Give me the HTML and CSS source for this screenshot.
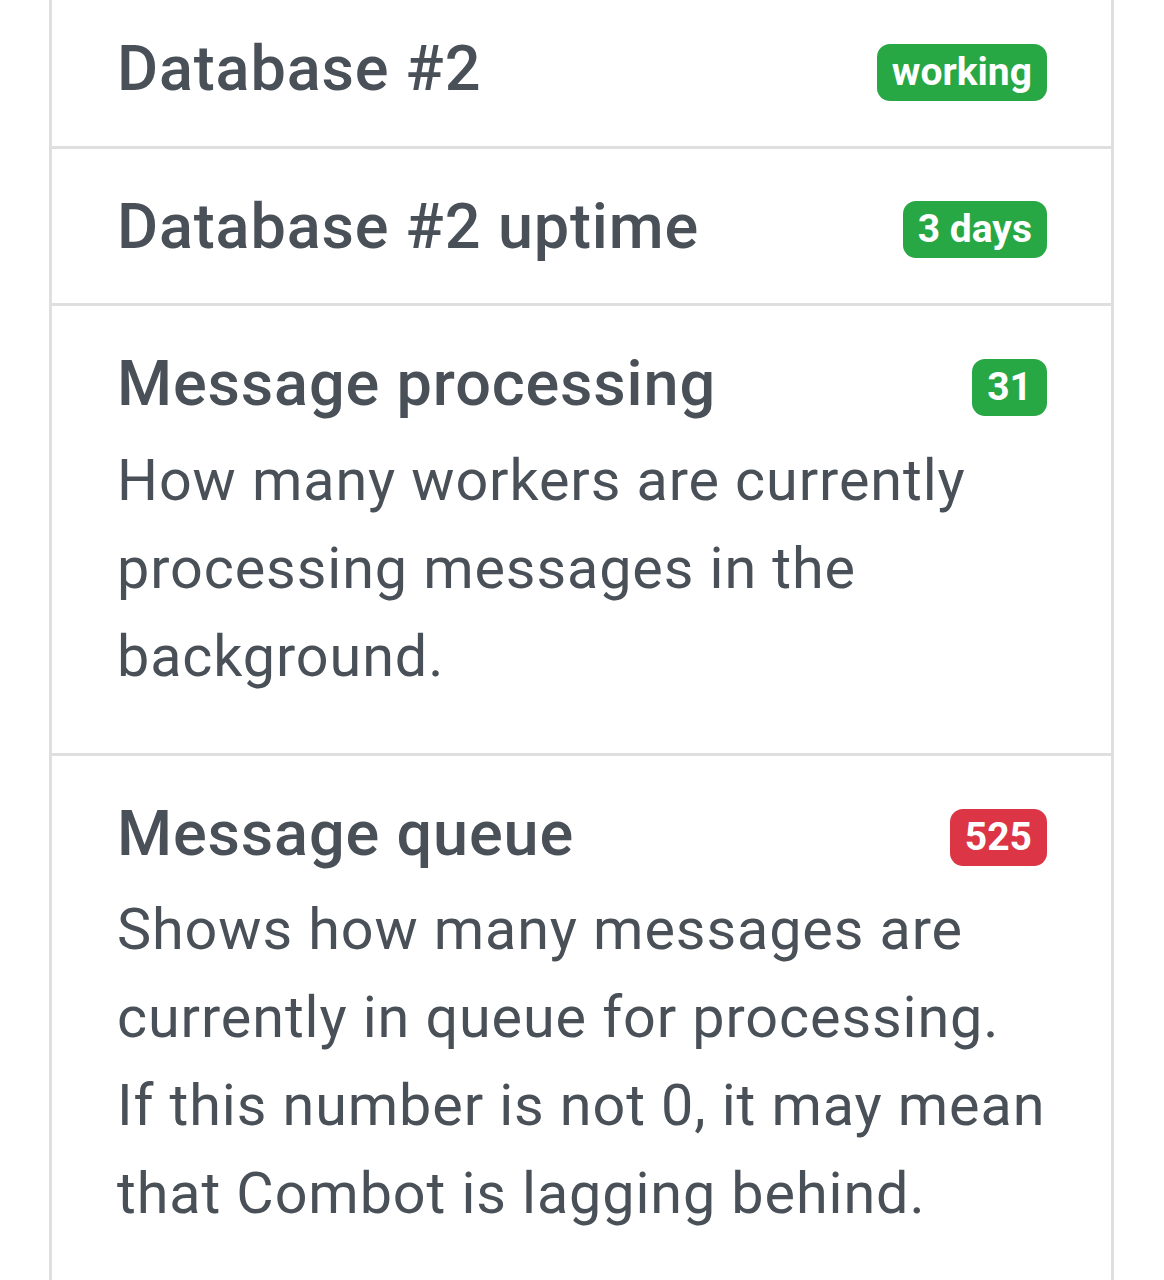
FILE: index.html
```html
<!DOCTYPE html>
<html lang="en">
<head>
<meta charset="utf-8">
<title>Status</title>
<link rel="stylesheet" href="styles.css">
</head>
<body>
<div class="page">
  <ul class="list">
    <li class="item">
      <div class="item-head">
        <h5 class="title">Database #2</h5>
        <span class="badge badge-success">working</span>
      </div>
    </li>
    <li class="item">
      <div class="item-head">
        <h5 class="title">Database #2 uptime</h5>
        <span class="badge badge-success">3 days</span>
      </div>
    </li>
    <li class="item item-desc">
      <div class="item-head">
        <h5 class="title">Message processing</h5>
        <span class="badge badge-success">31</span>
      </div>
      <p class="desc">How many workers are currently processing messages in the background.</p>
    </li>
    <li class="item item-desc">
      <div class="item-head">
        <h5 class="title">Message queue</h5>
        <span class="badge badge-danger">525</span>
      </div>
      <p class="desc">Shows how many messages are currently in queue for processing. If this number is not 0, it may mean that Combot is lagging behind.</p>
    </li>
  </ul>
</div>
</body>
</html>
```

FILE: styles.css
```css
html, body {
  margin: 0;
  padding: 0;
  background: #ffffff;
}

body {
  font-family: Roboto, "Liberation Sans", Arial, sans-serif;
  color: #495057;
}

.page {
  padding-left: 49px;
  width: 1065px;
  overflow: hidden;
  height: 1280px;
}

.list {
  list-style: none;
  margin: -9px 0 0 0;
  padding: 0;
}

.item {
  border-left: 3px solid #dfdfdf;
  border-right: 3px solid #dfdfdf;
  border-bottom: 3px solid #dfdfdf;
  padding: 40px 64px 39px 65px;
}

.item-desc {
  padding-bottom: 52px;
}

.item-head {
  display: flex;
  justify-content: space-between;
  align-items: center;
}

.title {
  margin: 0;
  font-size: 63px;
  font-weight: 500;
  line-height: 1.2;
  letter-spacing: 0.85px;
  color: #495057;
}

.badge {
  display: inline-block;
  font-size: 39px;
  font-weight: 700;
  line-height: 1;
  padding: 9px 15px;
  border-radius: 13px;
  color: #ffffff;
  margin-top: 7px;
}

.badge-success {
  background: #28a745;
}

.badge-danger {
  background: #dc3545;
}

.desc {
  margin: 15px 0 0 0;
  font-size: 57.5px;
  line-height: 88px;
  font-weight: 400;
  letter-spacing: 0.9px;
}
```
